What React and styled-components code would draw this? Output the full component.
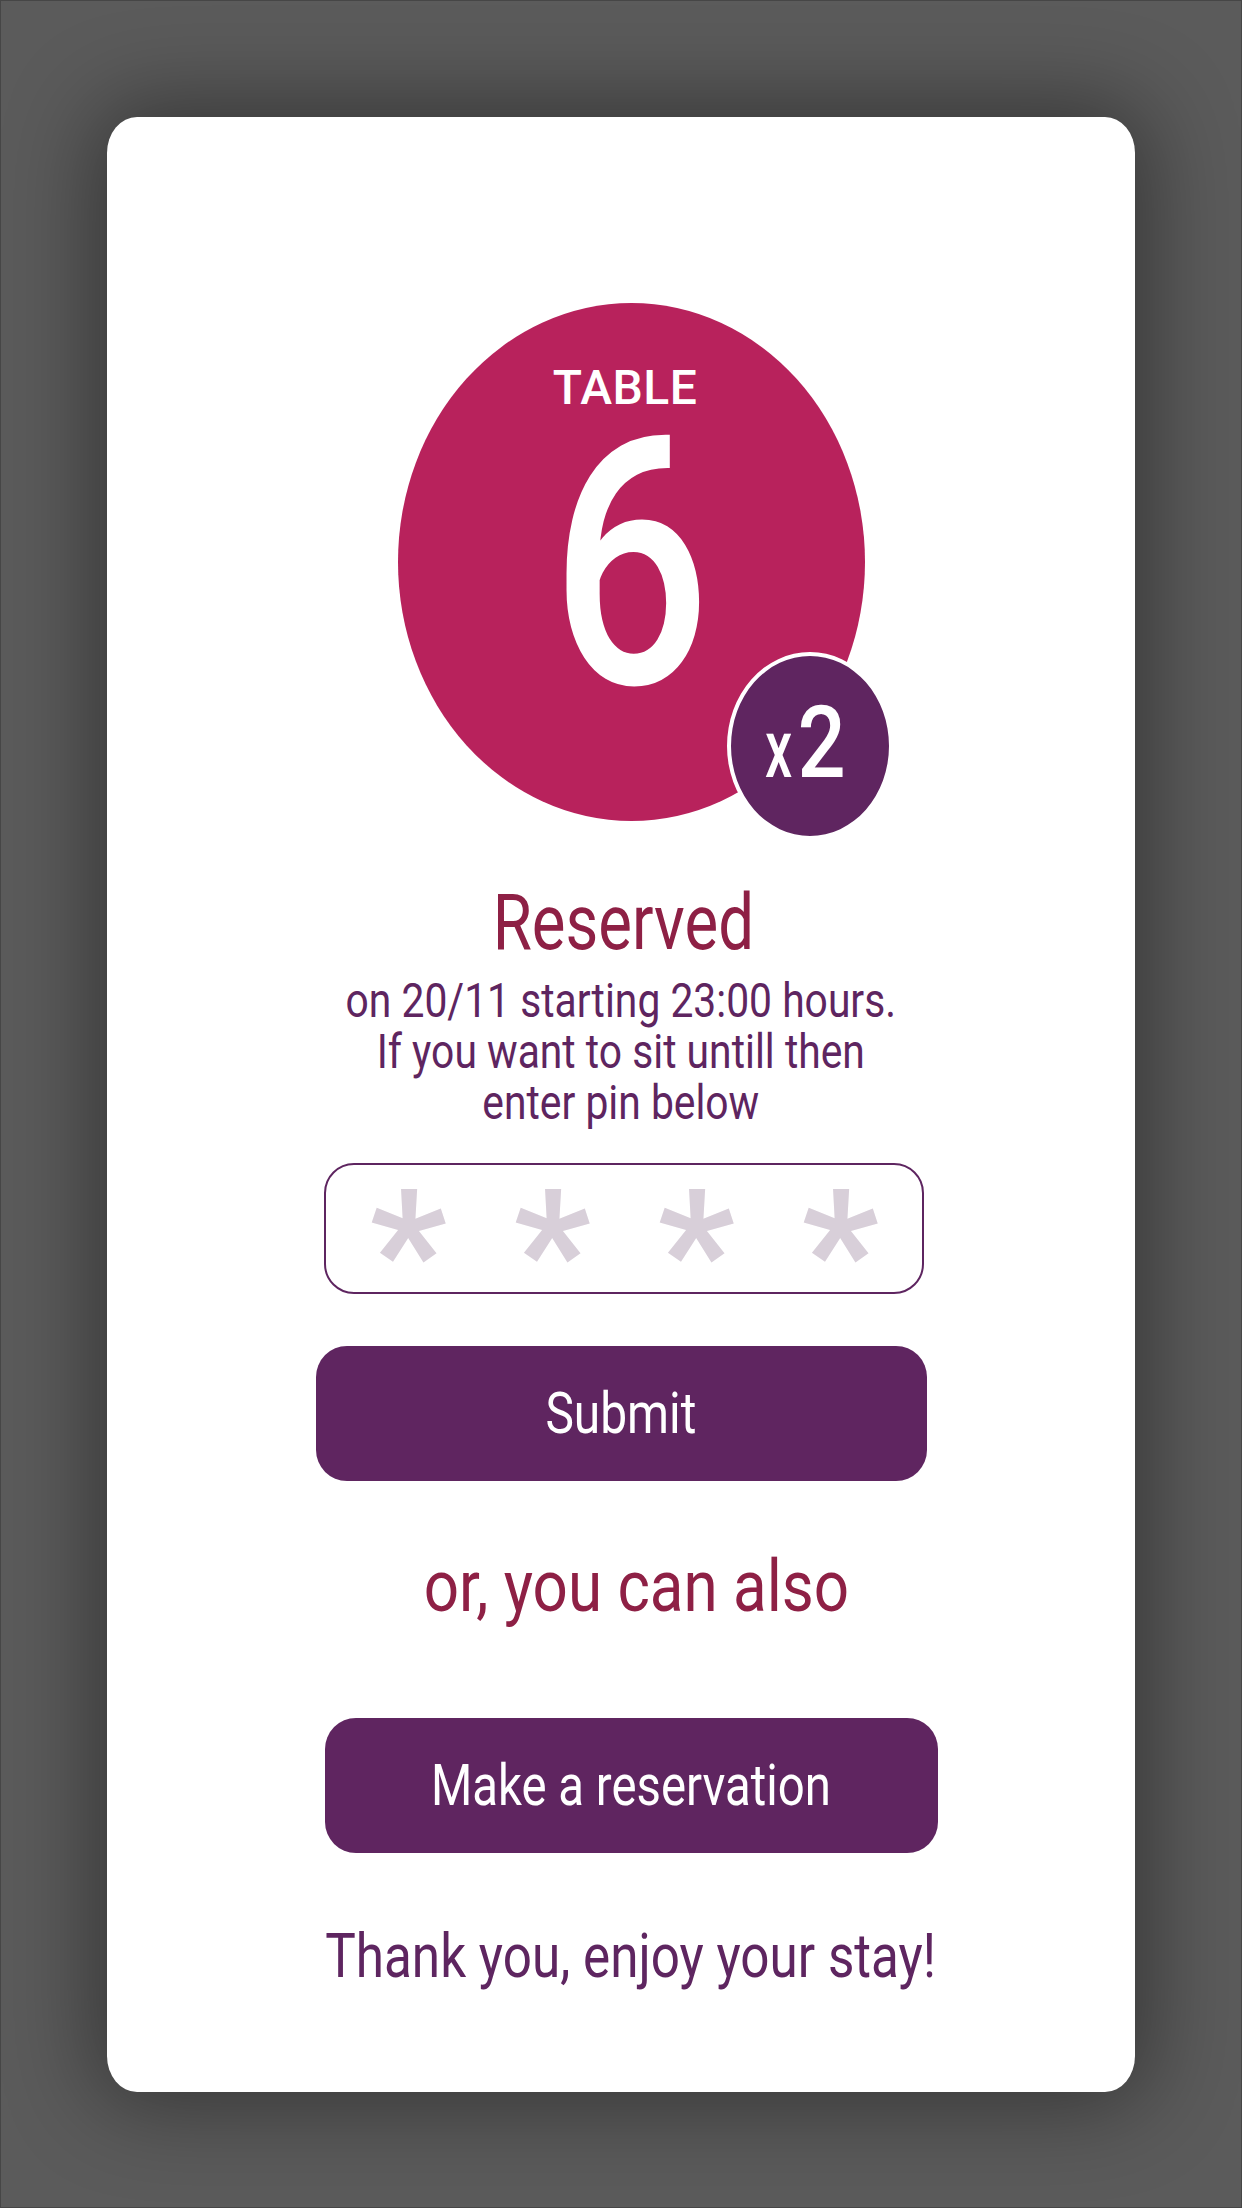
import React from "react";
import styled, { createGlobalStyle } from "styled-components";

const GlobalStyle = createGlobalStyle`
  html, body {
    margin: 0;
    padding: 0;
    background: #5b5b5b;
  }
  body {
    font-family: "Roboto", "Liberation Sans", sans-serif;
  }
`;

const Screen = styled.div`
  box-sizing: border-box;
  width: 1242px;
  height: 2208px;
  border: 1px solid #464646;
  background: #5b5b5b;
  padding-top: 116px;
  overflow: hidden;
`;

const Card = styled.div`
  box-sizing: border-box;
  width: 1028px;
  height: 1975px;
  margin-left: 106px;
  background: #fff;
  border-radius: 30px / 36px;
  box-shadow: 0 0 90px 12px rgba(0, 0, 0, 0.42);
  display: flex;
  flex-direction: column;
  align-items: center;
  padding-top: 186px;
`;

const TableBubble = styled.div`
  position: relative;
  box-sizing: border-box;
  width: 467px;
  height: 518px;
  margin-left: 20px;
  border-radius: 50%;
  background: #b8225c;
  display: flex;
  flex-direction: column;
  align-items: center;
  padding-top: 61px;
  color: #fff;
`;

const TableLabel = styled.div`
  margin-right: 12px;
  font-size: 48px;
  font-weight: 500;
  line-height: 1;
  letter-spacing: 0.5px;
`;

const TableNumber = styled.div`
  margin-top: 28px;
  font-size: 347px;
  font-weight: 500;
  line-height: 250px;
  transform: scaleX(0.81);
`;

const GuestBadge = styled.div`
  position: absolute;
  left: 329px;
  top: 349px;
  box-sizing: border-box;
  width: 166px;
  height: 188px;
  border-radius: 50%;
  border: 4px solid #fff;
  background: #5f2560;
  display: flex;
  align-items: center;
  justify-content: center;
  padding: 0 10px 8px 0;
`;

const BadgeText = styled.div`
  display: flex;
  align-items: baseline;
  line-height: 1;
  font-size: 101px;
  font-weight: 500;
`;

const BadgeCount = styled.span`
  display: inline-block;
  transform: scaleX(0.84);
  margin-left: -6px;
`;

const BadgeTimes = styled.span`
  display: inline-block;
  font-size: 82px;
  transform: scaleX(0.66);
`;

const Title = styled.div`
  margin-top: 64px;
  margin-left: 4px;
  font-size: 77px;
  line-height: 1;
  color: #8e2045;
  transform: scaleX(0.825);
`;

const Info = styled.div`
  margin-top: 13px;
  font-size: 48px;
  line-height: 51px;
  color: #5e2560;
  text-align: center;
  transform: scaleX(0.85);
`;

const PinBox = styled.div`
  box-sizing: border-box;
  margin-top: 35px;
  margin-left: 6px;
  width: 600px;
  height: 131px;
  border: 2px solid #5e2560;
  border-radius: 30px;
  display: grid;
  grid-template-columns: repeat(4, 144px);
  justify-content: center;
  align-items: center;
`;

const PinStar = styled.span`
  display: block;
  text-align: center;
  font-size: 170px;
  font-weight: 700;
  line-height: 80px;
  height: 80px;
  color: #d8cfd9;
  transform: translateY(24px);
`;

const ActionButton = styled.div`
  box-sizing: border-box;
  margin-top: ${(p) => p.gap}px;
  margin-left: ${(p) => p.shift || 0}px;
  width: ${(p) => p.w}px;
  height: 135px;
  border-radius: 31px;
  background: #5f2560;
  display: flex;
  align-items: center;
  justify-content: center;
`;

const ButtonLabel = styled.span`
  font-size: 57px;
  line-height: 1;
  color: #fff;
  transform: scaleX(${(p) => p.squeeze || 0.84});
  white-space: nowrap;
`;

const Alternative = styled.div`
  margin-top: 70px;
  margin-left: 30px;
  font-size: 72px;
  line-height: 1;
  color: #8e2045;
  transform: scaleX(0.86);
  white-space: nowrap;
`;

const Farewell = styled.div`
  margin-top: 73px;
  margin-left: 20px;
  font-size: 61px;
  line-height: 1;
  color: #5e2560;
  transform: scaleX(0.84);
  white-space: nowrap;
`;

export default function App() {
  return (
    <>
      <GlobalStyle />
      <Screen>
        <Card>
          <TableBubble>
            <TableLabel>TABLE</TableLabel>
            <TableNumber>6</TableNumber>
            <GuestBadge>
              <BadgeText>
                <BadgeTimes>x</BadgeTimes>
                <BadgeCount>2</BadgeCount>
              </BadgeText>
            </GuestBadge>
          </TableBubble>

          <Title>Reserved</Title>
          <Info>
            on 20/11 starting 23:00 hours.
            <br />
            If you want to sit untill then
            <br />
            enter pin below
          </Info>

          <PinBox>
            {[0, 1, 2, 3].map((i) => (
              <PinStar key={i}>*</PinStar>
            ))}
          </PinBox>

          <ActionButton gap={52} w={611}>
            <ButtonLabel>Submit</ButtonLabel>
          </ActionButton>

          <Alternative>or, you can also</Alternative>

          <ActionButton gap={95} w={613} shift={20}>
            <ButtonLabel squeeze={0.83}>Make a reservation</ButtonLabel>
          </ActionButton>

          <Farewell>Thank you, enjoy your stay!</Farewell>
        </Card>
      </Screen>
    </>
  );
}
